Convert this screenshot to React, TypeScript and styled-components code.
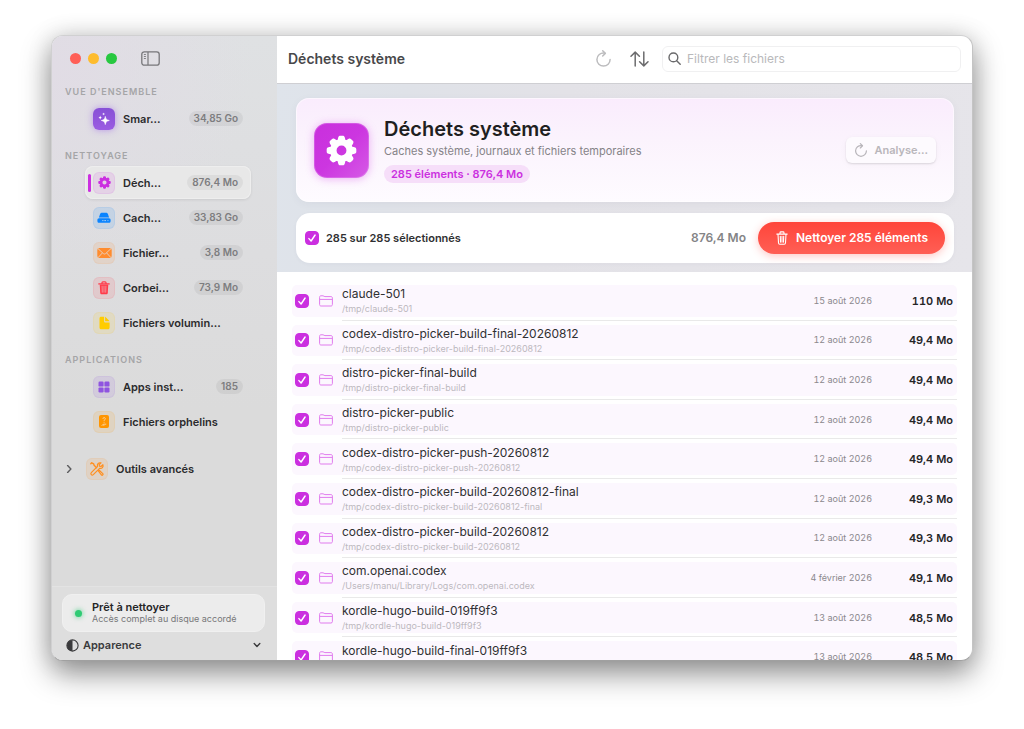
import React, { useState } from "react";
import styled, { createGlobalStyle, css } from "styled-components";

const accent = "#cb2fe0";

const GlobalStyle = createGlobalStyle`
  *, *::before, *::after { box-sizing: border-box; }
  html, body { margin: 0; background: #fff; }
  body { font-family: Inter, "Liberation Sans", sans-serif; color: #252527; font-size: 12px; line-height: 16px; }
  button, input { font: inherit; color: inherit; margin: 0; }
  button { cursor: pointer; border: 0; background: none; padding: 0; }
  ul { list-style: none; margin: 0; padding: 0; }
  h1, h2, h3, p { margin: 0; }
  svg { display: block; flex: none; }
`;

const Desktop = styled.div`
  height: 100vh;
  min-height: 480px;
  padding: 35px 51px 68px;
  background: #fff;
  display: flex;
`;

const Window = styled.div`
  flex: 1;
  min-width: 0;
  display: flex;
  overflow: hidden;
  border-radius: 12px;
  background: #fff;
  border: 1px solid #d0d0d1;
  border-right-color: #c4c4c4;
  border-bottom-color: #a0a0a0;
  box-shadow: 0 13px 30px rgba(0, 0, 0, 0.42), 0 0 24px rgba(0, 0, 0, 0.13);
`;

/* ---------- Sidebar ---------- */

const Sidebar = styled.aside`
  flex: none;
  width: 225px;
  display: flex;
  flex-direction: column;
  background: radial-gradient(circle at 0 30px, #e1dce5 0, rgba(225, 220, 229, 0) 200px),
    linear-gradient(#dfe1e3, #dddddf 35%, #dbdbdb 60%);
`;

const TitleBar = styled.div`
  display: flex;
  align-items: center;
  gap: 7px;
  height: 48px;
  padding: 0 0 3px 18px;
`;

const Light = styled.button<{ $color: string }>`
  width: 11px;
  height: 11px;
  border-radius: 50%;
  background: ${(p) => p.$color};
`;

const SidebarToggle = styled.button`
  margin-left: 17px;
`;

const Nav = styled.nav`
  flex: 1;
  display: flex;
  flex-direction: column;
  gap: 13px;
  padding: 0 26px 0 13px;
`;

const SectionTitle = styled.h3`
  font-size: 9px;
  font-weight: 600;
  line-height: 16px;
  letter-spacing: 1px;
  color: #a5a5a7;
  text-transform: uppercase;
  margin-bottom: 2px;
`;

const NavList = styled.ul`
  display: flex;
  flex-direction: column;
  gap: 2px;
  padding-left: 20px;
`;

const NavLink = styled.a<{ $active?: boolean }>`
  display: flex;
  align-items: center;
  gap: 8px;
  height: 33px;
  padding: 0 8px 0 2px;
  border-radius: 8px;
  color: #2b2b2d;
  font-weight: 600;
  font-size: 11px;
  text-decoration: none;
  ${(p) =>
    p.$active &&
    css`
      background: #e8e8e8;
      box-shadow: 0 1px 3px rgba(0, 0, 0, 0.09), inset 0 0 0 1px #eeeeee;
    `}
`;

const ActiveBar = styled.span<{ $active?: boolean }>`
  width: 3px;
  height: 18px;
  margin: 0 -6px 0 1px;
  border-radius: 2px;
  background: ${(p) => (p.$active ? accent : "transparent")};
`;

const NavLabel = styled.span`
  flex: 1;
  white-space: nowrap;
`;

const IconTile = styled.span<{ $tint: string; $solid?: boolean }>`
  display: grid;
  place-items: center;
  flex: none;
  width: 22px;
  height: 22px;
  border-radius: 6px;
  color: ${(p) => p.$tint};
  background: ${(p) => p.$tint}1e;
  box-shadow: inset 0 0 0 1px ${(p) => p.$tint}12;
  ${(p) =>
    p.$solid &&
    css`
      color: #fff;
      background: linear-gradient(#8750d6, #9b5ce2);
      box-shadow: 0 0 7px rgba(150, 90, 235, 0.55);
    `}
`;

const Badge = styled.span`
  height: 15px;
  padding: 0 5px;
  border-radius: 8px;
  background: rgba(0, 0, 0, 0.05);
  color: #7d7d7f;
  font-size: 10px;
  font-weight: 600;
  line-height: 15px;
  white-space: nowrap;
`;

const Disclosure = styled.button`
  display: flex;
  align-items: center;
  gap: 8px;
  height: 35px;
  font-size: 11px;
  font-weight: 600;
  color: #2b2b2d;
`;

const DisclosureMark = styled.span`
  margin-right: 5px;
  color: #5c5c5e;
`;

const SidebarFooter = styled.footer`
  padding: 7px 12px 7px 10px;
  border-top: 1px solid #e3e3e3;
  background: #dedede;
  display: flex;
  flex-direction: column;
  gap: 5px;
`;

const StatusCard = styled.div`
  display: flex;
  align-items: center;
  gap: 10px;
  height: 38px;
  padding: 0 12px;
  border-radius: 10px;
  background: #ececec;
  border: 1px solid #f0f0f0;
`;

const StatusDot = styled.span`
  width: 7px;
  height: 7px;
  border-radius: 50%;
  background: #2fcb74;
  box-shadow: 0 0 4px 1px rgba(47, 203, 116, 0.5);
`;

const StatusTitle = styled.p`
  font-size: 11px;
  font-weight: 600;
  line-height: 12px;
`;

const StatusText = styled.p`
  font-size: 9px;
  line-height: 12px;
  color: #777779;
`;

const AppearanceButton = styled.button`
  display: flex;
  align-items: center;
  gap: 4px;
  height: 16px;
  padding: 0 4px;
  font-size: 11px;
  font-weight: 600;
  color: #3a3a3c;
`;

const Grow = styled.span`
  flex: 1;
  text-align: left;
`;

/* ---------- Main ---------- */

const Main = styled.main`
  flex: 1;
  min-width: 0;
  display: flex;
  flex-direction: column;
`;

const Toolbar = styled.header`
  flex: none;
  display: flex;
  align-items: center;
  height: 48px;
  padding: 0 11px 2px;
  border-bottom: 1px solid #cfcfd3;
`;

const ToolbarTitle = styled.h2`
  flex: 1;
  font-size: 14px;
  font-weight: 600;
  color: #48484a;
  white-space: nowrap;
`;

const ToolButton = styled.button`
  display: grid;
  place-items: center;
  width: 36px;
  height: 26px;
  color: #6c6c6e;
  &:disabled { color: #bdbdbf; }
`;

const SearchField = styled.label`
  display: flex;
  align-items: center;
  gap: 6px;
  flex: 0 1 299px;
  height: 26px;
  margin-left: 5px;
  padding: 0 5px;
  border: 1px solid #f0f0f1;
  border-radius: 6px;
  color: #69696b;
`;

const SearchInput = styled.input`
  flex: 1;
  min-width: 0;
  border: 0;
  padding: 0;
  outline: 0;
  background: none;
  font-size: 12px;
  &::placeholder { color: #b9b9bb; opacity: 1; }
`;

const Hero = styled.section`
  flex: none;
  display: flex;
  flex-direction: column;
  gap: 11px;
  padding: 14px 18px 9px 19px;
  background: linear-gradient(100deg, #dfe4eb 0, #dfe2e8 18%, #e3e2e7 40%, #e6e5ea 100%);
`;

const SummaryCard = styled.div`
  display: flex;
  align-items: center;
  gap: 15px;
  height: 104px;
  padding: 0 18px;
  border-radius: 13px;
  background: linear-gradient(#faecfd, #fbf3fd 40%, #fefbff);
  box-shadow: 0 2px 8px rgba(60, 60, 90, 0.05), inset 0 0 0 1px rgba(255, 255, 255, 0.5);
`;

const SummaryIcon = styled.div`
  display: grid;
  place-items: center;
  flex: none;
  width: 55px;
  height: 55px;
  border-radius: 13px;
  color: #fff;
  background: linear-gradient(135deg, #c92fdd, #cc36e0 50%, #d65ae6);
  box-shadow: 0 1px 9px rgba(203, 47, 224, 0.35), inset 0 0 0 1px rgba(255, 255, 255, 0.18);
`;

const SummaryBody = styled.div`
  flex: 1;
  display: flex;
  flex-direction: column;
  align-items: flex-start;
`;

const SummaryTitle = styled.h1`
  font-size: 20px;
  line-height: 24px;
  font-weight: 600;
  color: #1f1f21;
`;

const SummaryText = styled.p`
  font-size: 11px;
  line-height: 20px;
  color: #858387;
`;

const SummaryPill = styled.span`
  height: 18px;
  margin-top: 4px;
  padding: 0 7px;
  border-radius: 9px;
  background: #f6def9;
  color: ${accent};
  font-size: 11px;
  line-height: 18px;
  font-weight: 600;
`;

const ScanButton = styled.button`
  display: flex;
  align-items: center;
  gap: 6px;
  height: 26px;
  padding: 0 8px;
  border-radius: 6px;
  background: #fdfafe;
  box-shadow: 0 1px 2px rgba(0, 0, 0, 0.12), 0 2px 8px rgba(0, 0, 0, 0.03);
  font-size: 11px;
  font-weight: 600;
  &:disabled { color: #b9b6bb; }
`;

const SelectionCard = styled.div`
  display: flex;
  align-items: center;
  height: 50px;
  padding: 0 9px;
  border-radius: 14px;
  background: #fff;
  box-shadow: 0 1px 4px rgba(60, 60, 90, 0.04);
`;

const SelectAll = styled.label`
  flex: 1;
  display: flex;
  align-items: center;
  gap: 7px;
  font-size: 11px;
  font-weight: 600;
  color: #303032;
`;

const SelectionSize = styled.span`
  margin-right: 12px;
  font-weight: 600;
  color: #848486;
`;

const CleanButton = styled.button`
  display: flex;
  align-items: center;
  gap: 8px;
  height: 32px;
  padding: 0 17px 0 18px;
  border-radius: 16px;
  color: #fff;
  font-weight: 600;
  background: linear-gradient(#ff453a, #ff5f55);
  box-shadow: 0 2px 8px rgba(255, 69, 58, 0.3);
`;

/* ---------- File list ---------- */

const ListViewport = styled.section`
  flex: 1;
  min-height: 0;
  overflow: hidden;
  padding: 9px 15px 0;
`;

const FileList = styled.ul`
  display: grid;
  grid-auto-rows: 1fr;
  height: calc(100% + 17px);
`;

const FileItem = styled.li`
  display: flex;
  flex-direction: column;
  padding-top: 4px;
`;

const FileRow = styled.label`
  flex: 1;
  min-height: 0;
  display: flex;
  align-items: center;
  padding: 0 4px 0 3px;
  border-radius: 5px;
  background: #fcf7fe;
`;

const Divider = styled.span`
  height: 1px;
  margin: 3px 0 0 50px;
  background: #e9e9e9;
`;

const FolderIcon = styled.span`
  margin: 0 9px 0 10px;
  color: #e07aee;
`;

const FileText = styled.span`
  flex: 1;
  min-width: 0;
  display: flex;
  flex-direction: column;
`;

const FileName = styled.span`
  font-size: 12px;
  line-height: 16px;
  color: #303032;
  white-space: nowrap;
`;

const FilePath = styled.span`
  font-size: 9px;
  line-height: 13px;
  color: #bdb9bf;
  white-space: nowrap;
`;

const FileDate = styled.span`
  font-size: 9px;
  font-variant-numeric: tabular-nums;
  color: #8b888d;
`;

const FileSize = styled.span`
  width: 81px;
  text-align: right;
  font-size: 11px;
  font-weight: 600;
  font-variant-numeric: tabular-nums;
`;

const CheckWrap = styled.span`
  display: grid;
  place-items: center;
  flex: none;
  width: 14px;
  height: 14px;
  color: #fff;
  & > * { grid-area: 1 / 1; }
  & > svg { pointer-events: none; }
`;

const CheckInput = styled.input`
  appearance: none;
  width: 14px;
  height: 14px;
  border-radius: 4px;
  border: 1px solid #d9a5e2;
  background: #fff;
  &:checked { background: ${accent}; border-color: ${accent}; }
`;

/* ---------- Icons ---------- */

type IconProps = { size?: number };

const Gear = ({ size = 14 }: IconProps) => (
  <svg width={size} height={size} viewBox="0 0 32 32" fill="none" aria-hidden>
    <circle cx="16" cy="16" r="8.4" stroke="currentColor" strokeWidth="6.600" />
    {[0, 45, 90, 135, 180, 225, 270, 315].map((a) => (
      <path
        key={a}
        transform={`rotate(${a} 16 16)`}
        fill="currentColor"
        d="M11.600 6.600 12.600 2.600C12.900 1.300 13.700.7 14.800.7h2.400c1.100 0 1.900.6 2.200 1.900l1 4z"
      />
    ))}
  </svg>
);

const Sparkles = () => (
  <svg width="14" height="14" viewBox="0 0 14 14" fill="currentColor" aria-hidden>
    <path d="M8.300 4.400c.5 2.700 1.200 3.500 4 4.100-2.800.6-3.500 1.400-4 4.100-.5-2.700-1.200-3.500-4-4.100 2.800-.6 3.500-1.400 4-4.100z" stroke="currentColor" strokeWidth=".6" strokeLinejoin="round" />
    <path d="M3.200 3.400c.3 1.500.7 1.900 2.100 2.200-1.400.3-1.800.7-2.100 2.200C2.900 6.300 2.500 5.900 1.100 5.600 2.500 5.300 2.900 4.900 3.200 3.400zM6.600.6c.2 1 .5 1.300 1.500 1.500-1 .2-1.300.5-1.500 1.500-.2-1-.5-1.300-1.500-1.500 1-.2 1.300-.5 1.500-1.500z" />
  </svg>
);

const Drive = () => (
  <svg width="14" height="12" viewBox="0 0 14 12" aria-hidden>
    <path fill="currentColor" d="M3 2.200C3.300 1.200 4 .7 5 .7h4c1 0 1.700.5 2 1.500l1.100 3.300H1.900zM2.100 6.200h9.800c1.100 0 1.700.7 1.700 1.800v.9c0 1.200-.6 1.900-1.800 1.900H2.200C1 10.800.4 10.100.4 8.900V8c0-1.100.6-1.800 1.700-1.800z" />
    <path d="M5.300 8.600h3.900M10.500 8.600h.9" stroke="#c8dcf0" strokeWidth=".9" strokeDasharray=".9 .5" />
  </svg>
);

const Envelope = () => (
  <svg width="15" height="12" viewBox="0 0 15 12" aria-hidden>
    <rect x=".3" y=".9" width="14.400" height="10.200" rx="2" fill="currentColor" />
    <path d="M.9 1.500 6.300 6.500c.8.700 1.600.700 2.400 0l5.400-5M1 10.700 5.300 6M14 10.700 9.700 6" stroke="#e6d3c4" strokeWidth=".9" fill="none" />
  </svg>
);

const TrashFill = () => (
  <svg width="12" height="14" viewBox="0 0 12 14" aria-hidden fill="none">
    <path fill="currentColor" d="M1.700 3.600h8.600l-.5 8.100c-.1 1-.6 1.500-1.500 1.500H3.700c-.9 0-1.400-.5-1.500-1.500z" />
    <path d="M.8 2.900h10.400M4 2.700V1.800c0-.6.300-.9.900-.9h2.200c.6 0 .9.300.9.900v.9" stroke="currentColor" strokeWidth="1.300" strokeLinecap="round" />
    <path d="M4.100 5.200l.2 6M6 5.200v6M7.900 5.200l-.2 6" stroke="#ecc5c8" strokeWidth=".6" strokeLinecap="round" />
  </svg>
);

const TrashLine = () => (
  <svg width="12" height="14" viewBox="0 0 12 14" aria-hidden fill="none" stroke="currentColor" strokeWidth="1.100" strokeLinecap="round">
    <path d="M.8 3.100h10.400M4 2.900V1.800c0-.6.300-.9.900-.9h2.200c.6 0 .9.300.9.900v1.100M2 3.200l.5 8.600c0 .9.500 1.400 1.300 1.400h4.400c.8 0 1.300-.5 1.300-1.400l.5-8.600M4.300 5.200l.2 5.900M6 5.200v5.900M7.700 5.200l-.2 5.900" />
  </svg>
);

const DocFill = () => (
  <svg width="11" height="14" viewBox="0 0 11 14" fill="currentColor" aria-hidden>
    <path d="M.5 2.500C.5 1.300 1.100.7 2.200.7h2.900v4.200c0 1 .5 1.500 1.500 1.500h4v5.100c0 1.200-.6 1.800-1.800 1.800H2.200C1.100 13.300.5 12.700.5 11.500z" />
    <path d="M6.100.8c.3.100.6.300.9.600l2.800 2.900c.3.300.5.600.6 1H6.700c-.4 0-.6-.2-.6-.6z" />
  </svg>
);

const GridFill = () => (
  <svg width="12" height="12" viewBox="0 0 12 12" fill="currentColor" aria-hidden>
    <rect x=".5" y=".5" width="5.100" height="5.100" rx="1.200" />
    <rect x="6.400" y=".5" width="5.100" height="5.100" rx="1.200" />
    <rect x=".5" y="6.400" width="5.100" height="5.100" rx="1.200" />
    <rect x="6.400" y="6.400" width="5.100" height="5.100" rx="1.200" />
  </svg>
);

const OrphanFile = () => (
  <svg width="10" height="13" viewBox="0 0 10 13" fill="none" aria-hidden>
    <rect width="10" height="13" rx="2" fill="currentColor" />
    <path d="M3.900 3.600c.1-1.500 2.500-1.400 2.400.1 0 .9-1.200 1-1.200 1.900M5.100 7.200v.1M3 10.500c.8-1.700 2-1.700 1.900 0M5 9.200h1.800" stroke="#f7dcb6" strokeWidth=".8" strokeLinecap="round" />
  </svg>
);

const Tools = () => (
  <svg width="16" height="16" viewBox="0 0 16 16" fill="none" stroke="currentColor" strokeLinecap="round" strokeLinejoin="round" aria-hidden>
    <path d="M13.900 3.700 12 5.500 10.400 5.200 10.200 3.700 12 1.900C9.700 1.200 7.900 3.100 8.500 5.300L2.300 11.600c-1.300 1.400.6 3.300 2 2L10.600 7.300c2.300.6 4.100-1.300 3.300-3.600z" strokeWidth="1.200" />
    <path d="M1.800 2.700 2.700 1.800 4.700 2.900 5.100 4.200 7.600 6.700" strokeWidth="1.400" />
    <path d="M9.300 10 10.200 9.200 13.800 12.600c.9.900-.5 2.200-1.400 1.300z" strokeWidth="1.200" />
  </svg>
);

const SidebarIcon = () => (
  <svg width="19" height="15" viewBox="0 0 19 15" fill="none" stroke="#77777a" aria-hidden>
    <rect x=".8" y=".8" width="17.400" height="13.400" rx="2.500" strokeWidth="1.300" />
    <path d="M7 1v13" strokeWidth="1.200" />
    <path d="M2.900 3.500h2M2.900 5.500h2M2.900 7.500h2" strokeWidth=".9" />
  </svg>
);

const Reload = ({ size = 17 }: IconProps) => (
  <svg width={size} height={size} viewBox="0 0 17 17" fill="none" stroke="currentColor" strokeWidth="1.500" strokeLinecap="round" strokeLinejoin="round" aria-hidden>
    <path d="M9.800 3.200C5.600 2.400 1.900 5.400 1.900 9.500a6.600 6.600 0 0 0 13.200 0" />
    <path d="M7.700.8l2.600 2.600-2.600 2.600" />
  </svg>
);

const SortArrows = () => (
  <svg width="19" height="16" viewBox="0 0 19 16" fill="none" stroke="currentColor" strokeWidth="1.500" strokeLinecap="round" strokeLinejoin="round" aria-hidden>
    <path d="M5.200 15V1.200M1 5.300l4.200-4.200 4.200 4.200M13.800 1v13.800M9.600 10.700l4.200 4.200 4.200-4.200" />
  </svg>
);

const Magnifier = () => (
  <svg width="13" height="13" viewBox="0 0 13 13" fill="none" stroke="currentColor" strokeWidth="1.400" strokeLinecap="round" aria-hidden>
    <circle cx="5.400" cy="5.400" r="4.400" />
    <path d="M8.700 8.700l3.500 3.500" />
  </svg>
);

const Folder = () => (
  <svg width="14" height="12" viewBox="0 0 14 12" fill="none" stroke="currentColor" aria-hidden>
    <path d="M.6 2.300C.6 1.300 1 .8 2 .8h2c.8 0 1 .8 1.900.8h6c1 0 1.500.5 1.500 1.500v6.400c0 1-.5 1.500-1.500 1.500H2.100c-1 0-1.500-.5-1.500-1.500zM.8 4.400h12.400" />
  </svg>
);

const Check = () => (
  <svg width="14" height="14" viewBox="0 0 14 14" fill="none" stroke="currentColor" strokeWidth="1.400" strokeLinecap="round" strokeLinejoin="round" aria-hidden>
    <path d="M3.900 7.600l2.200 2.400 4-6" />
  </svg>
);

const HalfCircle = () => (
  <svg width="13" height="13" viewBox="0 0 13 13" aria-hidden>
    <circle cx="6.500" cy="6.500" r="5.600" fill="none" stroke="currentColor" strokeWidth="1.100" />
    <path d="M6.500 1v11a5.500 5.500 0 0 1 0-11z" fill="currentColor" />
  </svg>
);

const Chevron = ({ down }: { down?: boolean }) => (
  <svg width="8" height="8" viewBox="0 0 8 8" fill="none" stroke="currentColor" strokeWidth="1.400" strokeLinecap="round" strokeLinejoin="round" aria-hidden>
    <path d={down ? "M1.200 2.600l2.800 2.800 2.800-2.800" : "M2.600.6 5.900 4 2.600 7.400"} />
  </svg>
);

/* ---------- Data ---------- */

type NavEntry = { label: string; badge?: string; tint: string; icon: React.ReactNode; active?: boolean; solid?: boolean };

const sections: { title: string; items: NavEntry[] }[] = [
  {
    title: "Vue d'ensemble",
    items: [{ label: "Smar…", badge: "34,85 Go", tint: "#9056dc", icon: <Sparkles />, solid: true }],
  },
  {
    title: "Nettoyage",
    items: [
      { label: "Déch…", badge: "876,4 Mo", tint: accent, icon: <Gear size={13} />, active: true },
      { label: "Cach…", badge: "33,83 Go", tint: "#0a84ff", icon: <Drive /> },
      { label: "Fichier…", badge: "3,8 Mo", tint: "#ff8c2e", icon: <Envelope /> },
      { label: "Corbei…", badge: "73,9 Mo", tint: "#ff3b4a", icon: <TrashFill /> },
      { label: "Fichiers volumin…", tint: "#ffcc00", icon: <DocFill /> },
    ],
  },
  {
    title: "Applications",
    items: [
      { label: "Apps inst…", badge: "185", tint: "#8f54e0", icon: <GridFill /> },
      { label: "Fichiers orphelins", tint: "#ff9500", icon: <OrphanFile /> },
    ],
  },
];

const files = [
  ["claude-501", "/tmp/claude-501", "15 août 2026", "110 Mo"],
  ["codex-distro-picker-build-final-20260812", "/tmp/codex-distro-picker-build-final-20260812", "12 août 2026", "49,4 Mo"],
  ["distro-picker-final-build", "/tmp/distro-picker-final-build", "12 août 2026", "49,4 Mo"],
  ["distro-picker-public", "/tmp/distro-picker-public", "12 août 2026", "49,4 Mo"],
  ["codex-distro-picker-push-20260812", "/tmp/codex-distro-picker-push-20260812", "12 août 2026", "49,4 Mo"],
  ["codex-distro-picker-build-20260812-final", "/tmp/codex-distro-picker-build-20260812-final", "12 août 2026", "49,3 Mo"],
  ["codex-distro-picker-build-20260812", "/tmp/codex-distro-picker-build-20260812", "12 août 2026", "49,3 Mo"],
  ["com.openai.codex", "/Users/manu/Library/Logs/com.openai.codex", "4 février 2026", "49,1 Mo"],
  ["kordle-hugo-build-019ff9f3", "/tmp/kordle-hugo-build-019ff9f3", "13 août 2026", "48,5 Mo"],
  ["kordle-hugo-build-final-019ff9f3", "/tmp/kordle-hugo-build-final-019ff9f3", "13 août 2026", "48,5 Mo"],
];

const Checkbox = ({ id }: { id: string }) => {
  const [checked, setChecked] = useState(true);
  return (
    <CheckWrap>
      <CheckInput id={id} type="checkbox" checked={checked} onChange={() => setChecked(!checked)} />
      <Check />
    </CheckWrap>
  );
};

export default function App() {
  return (
    <>
      <GlobalStyle />
      <Desktop>
        <Window>
          <Sidebar>
            <TitleBar>
              <Light $color="#ff5f57" aria-label="Fermer" />
              <Light $color="#febc2e" aria-label="Réduire" />
              <Light $color="#28c840" aria-label="Agrandir" />
              <SidebarToggle aria-label="Barre latérale">
                <SidebarIcon />
              </SidebarToggle>
            </TitleBar>
            <Nav>
              {sections.map((s) => (
                <section key={s.title}>
                  <SectionTitle>{s.title}</SectionTitle>
                  <NavList>
                    {s.items.map((i) => (
                      <li key={i.label}>
                        <NavLink href="#" $active={i.active}>
                          <ActiveBar $active={i.active} />
                          <IconTile $tint={i.tint} $solid={i.solid}>{i.icon}</IconTile>
                          <NavLabel>{i.label}</NavLabel>
                          {i.badge && <Badge>{i.badge}</Badge>}
                        </NavLink>
                      </li>
                    ))}
                  </NavList>
                </section>
              ))}
              <Disclosure aria-expanded={false}>
                <DisclosureMark><Chevron /></DisclosureMark>
                <IconTile $tint="#ff8f1f"><Tools /></IconTile>
                Outils avancés
              </Disclosure>
            </Nav>
            <SidebarFooter>
              <StatusCard>
                <StatusDot />
                <div>
                  <StatusTitle>Prêt à nettoyer</StatusTitle>
                  <StatusText>Accès complet au disque accordé</StatusText>
                </div>
              </StatusCard>
              <AppearanceButton>
                <HalfCircle />
                <Grow>Apparence</Grow>
                <Chevron down />
              </AppearanceButton>
            </SidebarFooter>
          </Sidebar>

          <Main>
            <Toolbar>
              <ToolbarTitle>Déchets système</ToolbarTitle>
              <ToolButton disabled aria-label="Actualiser"><Reload /></ToolButton>
              <ToolButton aria-label="Trier"><SortArrows /></ToolButton>
              <SearchField>
                <Magnifier />
                <SearchInput type="text" placeholder="Filtrer les fichiers" aria-label="Filtrer les fichiers" />
              </SearchField>
            </Toolbar>

            <Hero>
              <SummaryCard>
                <SummaryIcon><Gear size={31} /></SummaryIcon>
                <SummaryBody>
                  <SummaryTitle>Déchets système</SummaryTitle>
                  <SummaryText>Caches système, journaux et fichiers temporaires</SummaryText>
                  <SummaryPill>285 éléments · 876,4 Mo</SummaryPill>
                </SummaryBody>
                <ScanButton disabled><Reload size={14} />Analyse…</ScanButton>
              </SummaryCard>
              <SelectionCard>
                <SelectAll htmlFor="all">
                  <Checkbox id="all" />
                  285 sur 285 sélectionnés
                </SelectAll>
                <SelectionSize>876,4 Mo</SelectionSize>
                <CleanButton><TrashLine />Nettoyer 285 éléments</CleanButton>
              </SelectionCard>
            </Hero>

            <ListViewport>
              <FileList>
                {files.map(([name, path, date, size]) => (
                  <FileItem key={name}>
                    <FileRow htmlFor={name}>
                      <Checkbox id={name} />
                      <FolderIcon><Folder /></FolderIcon>
                      <FileText>
                        <FileName>{name}</FileName>
                        <FilePath>{path}</FilePath>
                      </FileText>
                      <FileDate>{date}</FileDate>
                      <FileSize>{size}</FileSize>
                    </FileRow>
                    <Divider />
                  </FileItem>
                ))}
              </FileList>
            </ListViewport>
          </Main>
        </Window>
      </Desktop>
    </>
  );
}
